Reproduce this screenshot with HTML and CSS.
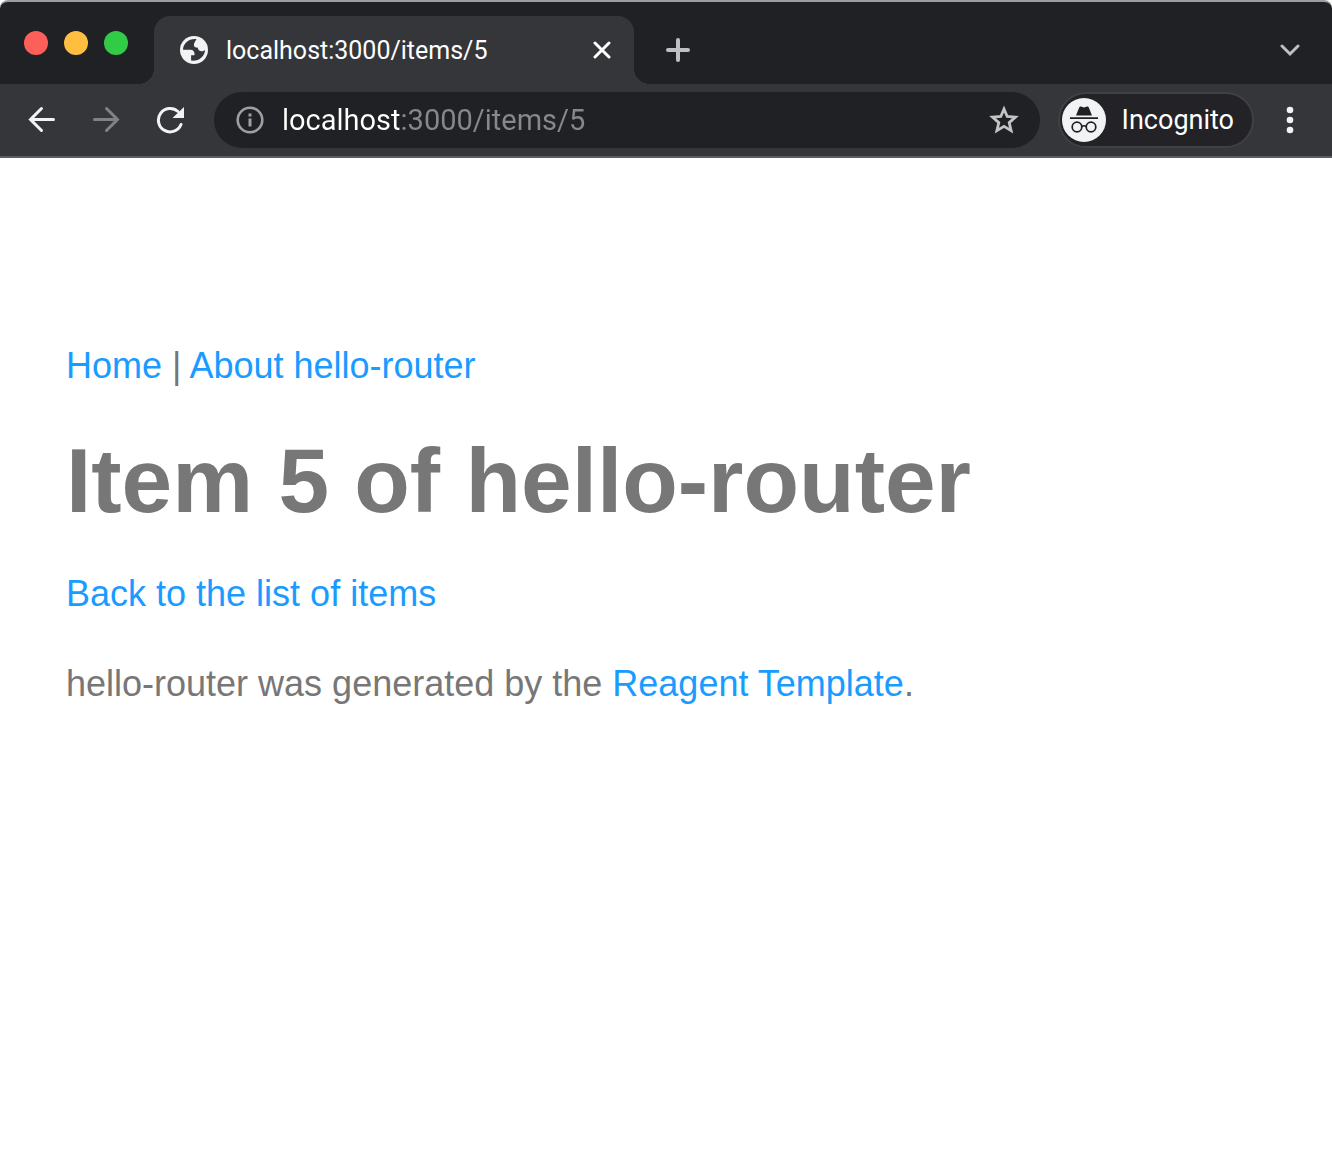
FILE: index.html
```html
<!DOCTYPE html>
<html lang="en">
<head>
<meta charset="utf-8">
<meta name="viewport" content="width=device-width, initial-scale=1">
<title>localhost:3000/items/5</title>
<link rel="stylesheet" href="styles.css">
</head>
<body>
<header class="browser">
  <div class="tab-strip">
    <div class="window-controls">
      <button class="dot dot-close" aria-label="Close window"></button>
      <button class="dot dot-minimize" aria-label="Minimize window"></button>
      <button class="dot dot-zoom" aria-label="Zoom window"></button>
    </div>
    <div class="tab">
      <svg class="icon-globe" viewBox="0 0 28 28" aria-hidden="true">
        <circle cx="14" cy="14" r="14" fill="#f1f3f4"/>
        <path fill="#35363a" d="M16.500 3.200C9 2.400 3.200 7.500 3 13.800H10.500c2.600 0 4 1.600 4 4.200v1.200h-3.400v5.400C18.500 25.600 25 20.500 25 13.700c-1 1-2 1.500-3.400 1.500-2.200 0-3.700-1.300-3.700-3.500-2.600 0-4-1-4-2.700 0-2 .9-3.100 2.600-5.800Z"/>
      </svg>
      <span class="tab-title">localhost:3000/items/5</span>
      <button class="icon-button tab-close" aria-label="Close tab">
        <svg width="18" height="18" viewBox="0 0 18 18" aria-hidden="true"><path d="M2 2l14 14M16 2L2 16" stroke="#fff" stroke-width="3" stroke-linecap="round"/></svg>
      </button>
    </div>
    <button class="icon-button new-tab" aria-label="New tab">
      <svg width="24" height="24" viewBox="0 0 24 24" aria-hidden="true"><path d="M12 2v20M2 12h20" stroke="#bdc1c6" stroke-width="4" stroke-linecap="round"/></svg>
    </button>
    <button class="icon-button tab-search" aria-label="Search tabs">
      <svg width="20" height="14" viewBox="0 0 20 14" aria-hidden="true"><path d="M2 3l8 8 8-8" fill="none" stroke="#bdc1c6" stroke-width="3" stroke-linecap="round"/></svg>
    </button>
  </div>
  <div class="toolbar">
    <div class="navigation">
      <button class="icon-button" aria-label="Back">
        <svg width="28" height="28" viewBox="0 0 28 28" aria-hidden="true"><path d="M25.500 13.500H2.500M13.500 2.500L2.500 13.500l11 11" fill="none" stroke="#f1f3f4" stroke-width="3" stroke-linecap="round"/></svg>
      </button>
      <button class="icon-button" aria-label="Forward" disabled>
        <svg width="28" height="28" viewBox="0 0 28 28" aria-hidden="true"><path d="M2.500 13.500h23M14.500 2.500l11 11-11 11" fill="none" stroke="#818285" stroke-width="3" stroke-linecap="round"/></svg>
      </button>
      <button class="icon-button" aria-label="Reload">
        <svg width="28" height="28" viewBox="0 0 28 28" aria-hidden="true"><path d="M25 18.500A11.700 11.700 0 1 1 22 5.500" fill="none" stroke="#f1f3f4" stroke-width="3" stroke-linecap="round"/><path d="M28 1v11H16.500Z" fill="#f1f3f4"/></svg>
      </button>
    </div>
    <form class="address-bar">
      <svg width="28" height="28" viewBox="0 0 28 28" aria-hidden="true"><circle cx="14" cy="14" r="12.300" fill="none" stroke="#9aa0a6" stroke-width="2.600"/><path d="M14 12.500v8M14 7.500v3" stroke="#9aa0a6" stroke-width="3"/></svg>
      <input class="address" type="text" aria-label="Address" value="localhost:3000/items/5">
      <button class="icon-button" type="button" aria-label="Bookmark this page">
        <svg width="30" height="30" viewBox="0 0 30 30" aria-hidden="true"><path d="M15 4l3.200 7.500 8.200.7-6.200 5.400 1.900 8L15 21.300l-7.100 4.300 1.900-8-6.200-5.400 8.200-.7Z" fill="none" stroke="#c4c4c4" stroke-width="2.800"/></svg>
      </button>
    </form>
    <button class="profile">
      <svg width="44" height="44" viewBox="0 0 44 44" aria-hidden="true">
        <circle cx="22" cy="22" r="22" fill="#f1f3f4"/>
        <path d="M14 17.500l3.200-8q.5-1.300 1.800-.9l3 .9 3-.9q1.300-.4 1.800.9l3.200 8ZM8 19.200h28v1.800H8Z" fill="#202124"/>
        <g fill="none" stroke="#202124" stroke-width="1.700"><circle cx="15" cy="29" r="4.800"/><circle cx="29" cy="29" r="4.800"/><path d="M19.800 28.500q2.200-1.500 4.400 0"/></g>
      </svg>
      <span>Incognito</span>
    </button>
    <button class="icon-button" aria-label="Browser menu">
      <svg width="8" height="28" viewBox="0 0 8 28" fill="#f1f3f4" aria-hidden="true"><circle cx="4" cy="4" r="3.300"/><circle cx="4" cy="14" r="3.300"/><circle cx="4" cy="24" r="3.300"/></svg>
    </button>
  </div>
</header>
<main class="page">
  <nav><a href="#home">Home</a> | <a href="#about">About hello-router</a></nav>
  <h1>Item 5 of hello-router</h1>
  <p><a href="#items">Back to the list of items</a></p>
  <footer>hello-router was generated by the <a href="#reagent">Reagent Template</a>.</footer>
</main>
</body>
</html>
```

FILE: styles.css
```css
* {
  box-sizing: border-box;
}

body {
  margin: 0;
  background: #fff;
  color: #777;
  font-family: "Liberation Sans", Arial, sans-serif;
}

button,
input {
  margin: 0;
  padding: 0;
  border: 0;
  background: none;
  color: inherit;
  font: inherit;
}

svg {
  display: block;
  flex: none;
}

.browser {
  color: #fff;
  font-family: Roboto, sans-serif;
  border-bottom: 2px solid #5b5c60;
}

.tab-strip {
  display: flex;
  height: 84px;
  padding: 0 32px 0 24px;
  background: #202124;
  border-top: 2px solid #9b9ea0;
  border-radius: 8px 8px 0 0;
}

.window-controls {
  display: flex;
  gap: 16px;
  padding-top: 29px;
}

.dot {
  width: 24px;
  height: 24px;
  border-radius: 50%;
}

.dot-close {
  background: #ff5f5a;
}

.dot-minimize {
  background: #ffbe3f;
}

.dot-zoom {
  background: #32cb48;
}

.tab {
  position: relative;
  display: flex;
  align-items: center;
  width: 480px;
  margin: 14px 0 0 26px;
  padding: 0 23px 0 26px;
  background: #35363a;
  border-radius: 16px 16px 0 0;
}

/* Flared feet that join the active tab to the toolbar */
.tab::before,
.tab::after {
  content: "";
  position: absolute;
  bottom: 0;
  width: 16px;
  height: 16px;
}

.tab::before {
  right: 100%;
  background: radial-gradient(circle at 0 0, #202124 16px, #35363a 16px);
}

.tab::after {
  left: 100%;
  background: radial-gradient(circle at 100% 0, #202124 16px, #35363a 16px);
}

.icon-globe {
  width: 28px;
  height: 28px;
}

.tab-title {
  flex: 1;
  margin-left: 18px;
  font-size: 25px;
}

.icon-button {
  display: flex;
  flex: none;
  align-items: center;
  justify-content: center;
}

.new-tab {
  margin: 14px 0 0 32px;
}

.tab-search {
  margin: 14px 0 0 auto;
}

.toolbar {
  display: flex;
  align-items: center;
  height: 72px;
  padding: 0 38px 0 28px;
  background: #35363a;
}

.navigation {
  display: flex;
  gap: 36px;
}

.address-bar {
  display: flex;
  flex: 1;
  align-items: center;
  height: 56px;
  margin-left: 30px;
  padding: 0 21px 0 22px;
  background: #202124;
  border-radius: 28px;
}

/* The host is white, the rest of the address is dimmed */
.address {
  flex: 1;
  min-width: 0;
  height: 40px;
  margin-left: 18px;
  background: linear-gradient(90deg, #fff 119px, #87888a 119px);
  background-clip: text;
  -webkit-background-clip: text;
  color: transparent;
  font-size: 29px;
}

.profile {
  display: flex;
  align-items: center;
  gap: 16px;
  height: 56px;
  margin: 0 32px 0 18px;
  padding: 0 18px 0 2px;
  background: #232327;
  border: 2px solid #3f4044;
  border-radius: 28px;
  font-size: 27px;
}

.page {
  padding: 181px 66px 60px;
  font-size: 36px;
  line-height: 54px;
}

.page h1 {
  margin: 34px 0 32px;
  font-size: 91px;
  line-height: 108px;
}

.page p {
  margin: 0 0 36px;
}

.page a {
  color: #1a9bff;
  text-decoration: none;
}
```
